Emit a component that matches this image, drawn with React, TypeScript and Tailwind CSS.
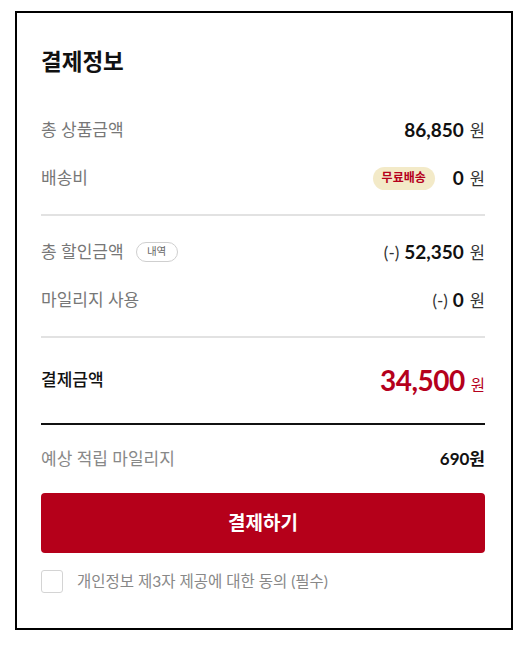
import React from 'react';

const font = { fontFamily: 'Lato, "Noto Sans CJK KR", sans-serif' };

function Won({ className = 'text-[16.5px] text-[#333]' }: { className?: string }) {
  return <span className={`ml-[6px] ${className}`}>원</span>;
}

export default function App() {
  return (
    <div className="min-h-screen bg-white pt-[11px] pl-[15px]" style={font}>
      <div className="w-[498px] h-[619px] border-2 border-black pl-6 pr-[26px] pt-[32px]">
        <h2 className="text-[22.5px] leading-[34px] font-bold text-[#111]">결제정보</h2>

        <div className="mt-[15px] flex flex-col gap-[18px] py-[21px] border-b-2 border-[#e2e2e2]">
          <div className="h-[30px] flex items-center justify-between">
            <span className="text-[17px] text-[#777]">총 상품금액</span>
            <span className="flex items-baseline">
              <span className="text-[19px] font-bold text-[#111]">86,850</span>
              <Won />
            </span>
          </div>
          <div className="h-[30px] flex items-center justify-between">
            <span className="text-[17px] text-[#777]">배송비</span>
            <span className="flex items-center">
              <span className="h-[23px] px-[9px] rounded-full bg-[#f3eac8] text-[12px] font-bold text-[#b5001c] flex items-center">
                무료배송
              </span>
              <span className="ml-[18px] flex items-baseline">
                <span className="text-[19px] font-bold text-[#111]">0</span>
                <Won />
              </span>
            </span>
          </div>
        </div>

        <div className="flex flex-col gap-[18px] py-[21px] border-b-2 border-[#e2e2e2]">
          <div className="h-[30px] flex items-center justify-between">
            <span className="flex items-center">
              <span className="text-[17px] text-[#777]">총 할인금액</span>
              <span className="ml-[12px] h-[20px] w-[42px] rounded-full border border-[#cfcfcf] text-[10.5px] text-[#666] flex items-center justify-center">
                내역
              </span>
            </span>
            <span className="flex items-baseline">
              <span className="text-[17px] text-[#333] mr-[5px]">(-)</span>
              <span className="text-[19px] font-bold text-[#111]">52,350</span>
              <Won />
            </span>
          </div>
          <div className="h-[30px] flex items-center justify-between">
            <span className="text-[17px] text-[#777]">마일리지 사용</span>
            <span className="flex items-baseline">
              <span className="text-[17px] text-[#333] mr-[5px]">(-)</span>
              <span className="text-[19px] font-bold text-[#111]">0</span>
              <Won />
            </span>
          </div>
        </div>

        <div className="pt-[22px] pb-[23px] border-b-2 border-[#111]">
          <div className="h-[40px] flex items-center justify-between">
            <span className="text-[17px] font-medium text-[#111]">결제금액</span>
            <span className="flex items-baseline">
              <span className="text-[28px] font-bold text-[#b5001c] tracking-[-0.5px]">34,500</span>
              <Won className="text-[15.5px] text-[#b5001c]" />
            </span>
          </div>
        </div>

        <div className="mt-[19px] h-[30px] flex items-center justify-between">
          <span className="text-[17px] text-[#888]">예상 적립 마일리지</span>
          <span className="text-[17px] font-bold text-[#111]">690원</span>
        </div>

        <button className="mt-[19px] w-full h-[60px] rounded-[4px] bg-[#b5001a] text-white text-[19px] font-bold">
          결제하기
        </button>

        <label className="mt-[17px] flex items-center">
          <span className="w-[22px] h-[23px] rounded-[3px] border border-[#d4d4d4] bg-white" />
          <span className="ml-[14px] text-[15.5px] text-[#888]">개인정보 제3자 제공에 대한 동의 (필수)</span>
        </label>
      </div>
    </div>
  );
}
